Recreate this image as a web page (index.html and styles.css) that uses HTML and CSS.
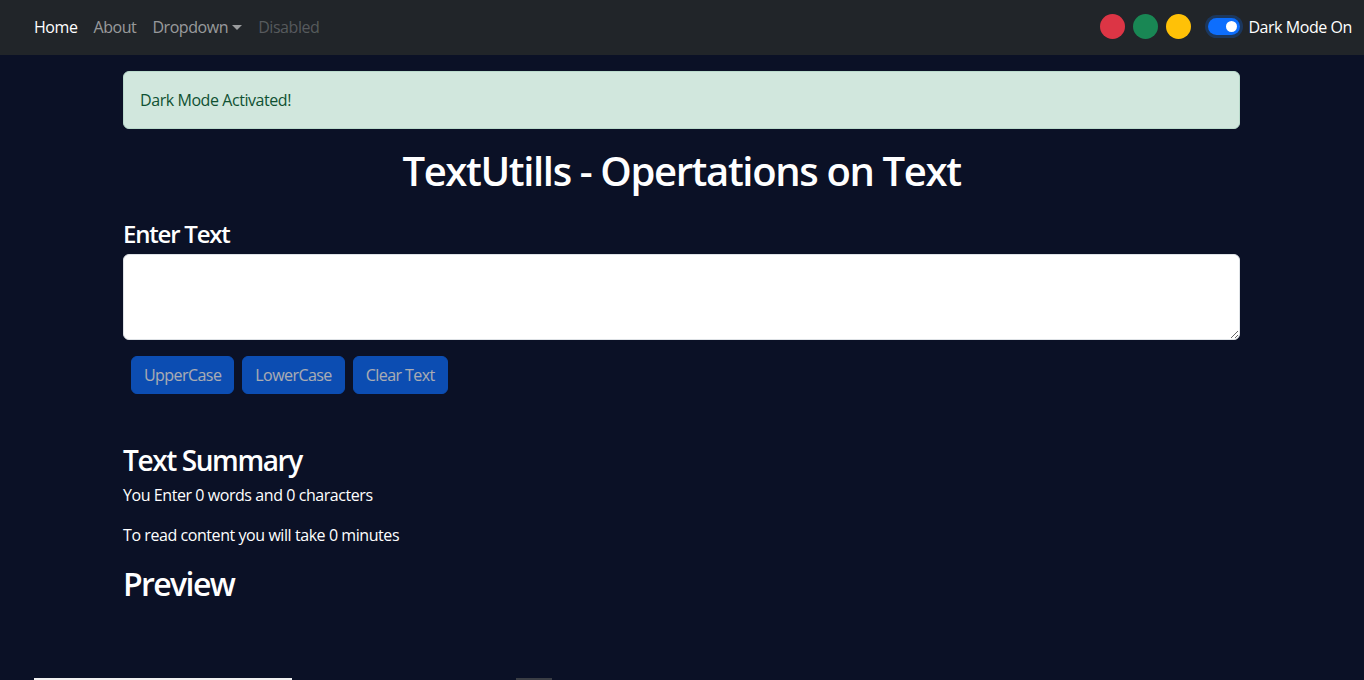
FILE: index.html
```html
<!DOCTYPE html>
<html lang="en">
<head>
<meta charset="utf-8">
<title>TextUtills</title>
<link rel="stylesheet" href="styles.css">
</head>
<body>
<nav class="navbar">
  <ul class="nav-links">
    <li><a class="nav-link active">Home</a></li>
    <li><a class="nav-link">About</a></li>
    <li><a class="nav-link dropdown-toggle">Dropdown</a></li>
    <li><a class="nav-link disabled">Disabled</a></li>
  </ul>
  <div class="nav-right">
    <span class="dot dot-red"></span>
    <span class="dot dot-green"></span>
    <span class="dot dot-yellow"></span>
    <span class="switch"><span class="knob"></span></span>
    <span class="switch-label">Dark Mode On</span>
  </div>
</nav>
<main class="container">
  <div class="alert">Dark Mode Activated!</div>
  <h1 class="title">TextUtills - Opertations on Text</h1>
  <h4 class="label">Enter Text</h4>
  <textarea class="textbox" rows="3"></textarea>
  <div class="buttons">
    <button class="btn">UpperCase</button>
    <button class="btn">LowerCase</button>
    <button class="btn">Clear Text</button>
  </div>
  <section class="summary">
    <h3 class="summary-title">Text Summary</h3>
    <p class="line">You Enter 0 words and 0 characters</p>
    <p class="line">To read content you will take 0 minutes</p>
    <h2 class="preview-title">Preview</h2>
  </section>
</main>
<div class="bottom-strip">
  <span class="strip-white"></span>
  <span class="strip-gray"></span>
</div>
</body>
</html>
```
FILE: styles.css
```css
* { box-sizing: border-box; }
html, body { margin: 0; padding: 0; }
body {
  background: #0b1126;
  color: #ffffff;
  font-family: "Open Sans", "Noto Sans", sans-serif;
  font-size: 16px;
  line-height: 1.5;
  letter-spacing: -0.027em;
  height: 680px;
  overflow: hidden;
}
.navbar {
  height: 55px;
  background: #212529;
  display: flex;
  align-items: center;
  justify-content: space-between;
  padding: 0 12px 0 26px;
}
.nav-links {
  list-style: none;
  margin: 0;
  padding: 0;
  display: flex;
}
.nav-link {
  display: block;
  padding: 7px 8px 9px;
  color: rgba(255,255,255,0.55);
  text-decoration: none;
}
.nav-link.active { color: #ffffff; }
.nav-link.disabled { color: rgba(255,255,255,0.25); }
.dropdown-toggle::after {
  content: "";
  display: inline-block;
  margin-left: 4px;
  vertical-align: 3px;
  border-top: 5px solid;
  border-left: 5px solid transparent;
  border-right: 5px solid transparent;
}
.nav-right {
  display: flex;
  align-items: center;
  padding-bottom: 2px;
}
.dot {
  width: 25px;
  height: 25px;
  border-radius: 50%;
  margin-right: 8px;
  display: inline-block;
}
.dot-red { background: #dc3545; }
.dot-green { background: #198754; }
.dot-yellow { background: #ffc107; margin-right: 17px; }
.switch {
  width: 32px;
  height: 17px;
  border-radius: 9px;
  background: #0d6efd;
  box-shadow: 0 0 0 3px rgba(13,110,253,0.25);
  display: flex;
  align-items: center;
  justify-content: flex-end;
  padding-right: 3px;
  margin-right: 8px;
}
.knob {
  width: 11px;
  height: 11px;
  border-radius: 50%;
  background: #ffffff;
}
.switch-label { color: #ffffff; }
.container {
  max-width: 1140px;
  margin: 0 auto;
  padding: 0 12px 0 11px;
}
.alert {
  margin-top: 16px;
  background: #d1e7dd;
  color: #0f5132;
  border: 1px solid #badbcc;
  border-radius: 6px;
  padding: 16px;
}
.title {
  margin: 18px 0 8px;
  font-size: 40px;
  line-height: 48px;
  font-weight: 600;
  letter-spacing: -0.034em;
  text-align: center;
}
.label {
  margin: 24px 0 6px;
  font-size: 24px;
  line-height: 29px;
  font-weight: 600;
  letter-spacing: -0.05em;
}
.textbox {
  display: block;
  width: 100%;
  height: 86px;
  margin: 0;
  border: 1px solid #dee2e6;
  border-radius: 6px;
  background: #ffffff;
  padding: 6px 12px;
  font-family: inherit;
  font-size: 16px;
  resize: vertical;
}
.buttons {
  display: flex;
  gap: 8px;
  padding-left: 8px;
  margin-top: 16px;
}
.btn {
  background: #0d6efd;
  color: #ffffff;
  opacity: 0.65;
  border: 1px solid #0d6efd;
  border-radius: 6px;
  padding: 6px 12px;
  font-family: inherit;
  font-size: 16px;
  line-height: 24px;
  letter-spacing: -0.035em;
}
.summary { margin-top: 49px; }
.summary-title {
  margin: 0 0 6px;
  font-size: 28px;
  line-height: 34px;
  font-weight: 600;
  letter-spacing: -0.05em;
}
.line { margin: 0 0 16px; }
.preview-title {
  margin: 18px 0 0;
  font-size: 32px;
  line-height: 38px;
  font-weight: 600;
  letter-spacing: -0.05em;
}
.bottom-strip {
  position: fixed;
  left: 0;
  right: 0;
  bottom: 0;
  height: 2px;
}
.strip-white {
  position: absolute;
  left: 34px;
  width: 258px;
  height: 2px;
  background: #f2f2f2;
}
.strip-gray {
  position: absolute;
  left: 516px;
  width: 36px;
  height: 2px;
  background: #3a3d44;
}
```
